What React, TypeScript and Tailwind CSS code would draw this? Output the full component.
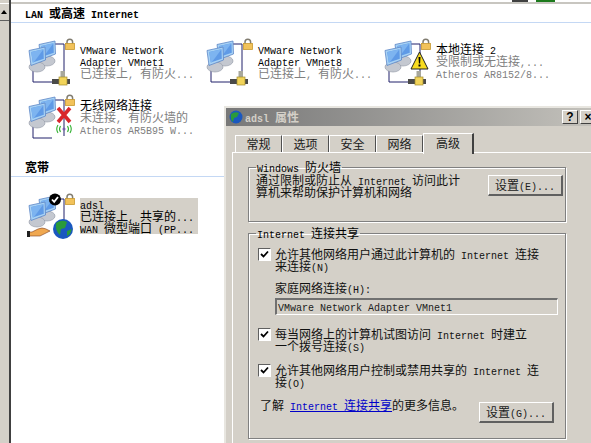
import type { ReactNode } from "react";

// SimSun-like metrics: latin is 6px wide, CJK 12px wide
function Txt({ children, bold }: { children: string; bold?: boolean }) {
  const parts = children.split(/([\u2E80-\uFFEF]+)/).filter(Boolean);
  return (
    <>
      {parts.map((p, i) =>
        /[\u2E80-\uFFEF]/.test(p) ? (
          <span key={i} className={`font-['Noto_Sans_CJK_SC',sans-serif] text-[12px] ${bold ? "font-bold" : "font-normal"}`}>
            {p}
          </span>
        ) : (
          <span key={i} className={`font-['Liberation_Mono',monospace] text-[10px] ${bold ? "font-bold" : "font-normal"}`}>
            {p}
          </span>
        )
      )}
    </>
  );
}

function Line({ children, className = "", bold }: { children: string; className?: string; bold?: boolean }) {
  return (
    <div className={`-mt-px mb-px h-3 leading-3 whitespace-pre ${className}`}>
      <Txt bold={bold}>{children}</Txt>
    </div>
  );
}

function Lock() {
  return (
    <g>
      <path d="M40 6V4a2.8 2.8 0 0 1 5.6 0v2" fill="none" stroke="#807c70" strokeWidth="1.5" />
      <rect x="38.5" y="5.5" width="9" height="6" fill="#f2c25a" stroke="#c89a30" strokeWidth="0.8" />
    </g>
  );
}

function Monitor({ x, y }: { x: number; y: number }) {
  return (
    <g transform={`translate(${x} ${y})`}>
      <ellipse cx="8" cy="20" rx="8" ry="5" fill="#c4c8d0" stroke="#8f95a2" strokeWidth="0.6" />
      <path d="M0 3.5 L16 0 L16.5 13 L2 18.5 Z" fill="#a8d2f4" stroke="#5d86c6" strokeWidth="0.8" />
      <path d="M2.2 5 L14.5 2.2 L14.8 11.8 L3.8 15.6 Z" fill="#5f9ae6" />
      <path d="M2.2 5 L14.5 2.2 L5 15 L3.8 15.6 Z" fill="#7db4f0" />
    </g>
  );
}

function Connector() {
  return (
    <g>
      <rect x="33.5" y="33" width="4.5" height="7" fill="#a8a89c" />
      <rect x="25" y="41" width="18" height="5" fill="#4a4a48" />
      <rect x="32" y="39" width="8" height="8" fill="#f2d45a" stroke="#a08a30" strokeWidth="0.7" />
    </g>
  );
}

function NetIcon({ kind }: { kind: "lan" | "warn" | "wifi" | "wan" }) {
  return (
    <svg width="48" height="48" viewBox="0 0 48 48" className="shrink-0">
      {kind === "wan" ? (
        <path d="M27 6H37V32" fill="none" stroke="#20206a" strokeWidth="1" />
      ) : (
        <path
          d={kind === "wifi" ? "M6 32V44H25M27 6H37V42" : "M6 32V44H26M27 6H37V34"}
          fill="none"
          stroke="#20206a"
          strokeWidth="1"
        />
      )}
      <Monitor x={12} y={3} />
      <Monitor x={2} y={9} />
      <Lock />
      {kind === "lan" && <Connector />}
      {kind === "warn" && (
        <g>
          <Connector />
          <path d="M36.5 14 L45 31 H28 Z" fill="#f8dc20" stroke="#222" strokeWidth="1" />
          <path d="M35.5 19h2l-.4 6.5h-1.2zM35.5 26.5h2v2h-2z" fill="#000" />
        </g>
      )}
      {kind === "wifi" && (
        <g>
          <path d="M31 14 L43 28 M43 14 L31 28" stroke="#d8262c" strokeWidth="3.6" />
          <circle cx="37" cy="35" r="1.5" fill="#7a5ab0" />
          <path d="M33.5 32q-2 3 0 6M40.5 32q2 3 0 6M31 31q-2.5 4 0 8M43 31q2.5 4 0 8" fill="none" stroke="#30b030" strokeWidth="1.1" />
        </g>
      )}
      {kind === "wan" && (
        <g>
          <circle cx="28" cy="6.5" r="6" fill="#000" />
          <path d="M25 6.5l2.2 2.4L31 4" fill="none" stroke="#fff" strokeWidth="1.8" />
          <circle cx="36" cy="36" r="10" fill="#1a58c0" />
          <path d="M29 30q6-4 11-1l-2 6-4 1-1 6q-5-4-4-12zM40 38l5-2-2 5-3 2z" fill="#2a9a3a" />
          <path d="M0 39h5q7-4 10-4t8 3l-10 5H0z" fill="#f0a850" stroke="#804020" strokeWidth="0.6" />
          <rect x="0" y="38" width="3" height="6" fill="#202020" />
        </g>
      )}
    </svg>
  );
}

function Tile({ kind, lines, w = "w-[178px]", selected }: { kind: "lan" | "warn" | "wifi" | "wan"; lines: { t: string; gray?: boolean }[]; w?: string; selected?: boolean }) {
  return (
    <div className={`flex items-start ${w}`}>
      <NetIcon kind={kind} />
      <div className={`ml-[5px] mt-[5px] flex flex-col ${selected ? "bg-[#d4d0c8] w-[118px]" : ""}`}>
        {lines.map((l) => (
          <Line key={l.t} className={l.gray ? "text-[#808080]" : "text-black"}>
            {l.t}
          </Line>
        ))}
      </div>
    </div>
  );
}

function SectionHead({ children, className = "" }: { children: string; className?: string }) {
  return (
    <div className={`h-[18px] border-b border-[#c4d8f4] pl-[14px] pt-[2px] ${className}`}>
      <Line bold>{children}</Line>
    </div>
  );
}

function Btn({ children, className = "" }: { children: string; className?: string }) {
  return (
    <div className={`flex w-[75px] h-[21px] items-center justify-center border-t border-l border-white border-r-2 border-b-2 border-r-[#606060] border-b-[#606060] bg-[#d4d0c8] text-[#202020] ${className}`}>
      <Line>{children}</Line>
    </div>
  );
}

function Group({ title, className = "", children }: { title: string; className?: string; children: ReactNode }) {
  return (
    <fieldset className={`border border-[#808080] shadow-[1px_1px_0_#fff,inset_1px_1px_0_#fff] ${className}`}>
      <legend className="ml-[7px] px-[1px] h-3 text-black">
        <Line>{title}</Line>
      </legend>
      {children}
    </fieldset>
  );
}

function Check({ lines, className = "" }: { lines: string[]; className?: string }) {
  return (
    <div className={`flex items-start ${className}`}>
      <div className="flex size-[13px] shrink-0 items-center justify-center border-t border-l border-[#606060] border-r border-b border-r-white border-b-white bg-white">
        <svg width="9" height="9" viewBox="0 0 9 9">
          <path d="M1 4l2.5 2.5L8 1.5" fill="none" stroke="#000" strokeWidth="1.8" />
        </svg>
      </div>
      <div className="ml-[4px] text-[#101010]">
        {lines.map((l) => (
          <Line key={l}>{l}</Line>
        ))}
      </div>
    </div>
  );
}

function Dialog() {
  const tabs = ["常规", "选项", "安全", "网络"];
  return (
    <div className="absolute left-[224px] top-[106px] w-[374px] h-[340px] border-t-2 border-l-2 border-[#e8e6e0] bg-[#d4d0c8]">
      <div className="flex h-[18px] items-center bg-gradient-to-r from-[#787878] to-[#c4c2bc] pl-[3px] pr-[2px]">
        <svg width="14" height="14" viewBox="0 0 14 14">
          <circle cx="7" cy="7" r="6.5" fill="#1a58c0" />
          <path d="M2 4q4-3 8-1l-2 4-3 1-1 4q-3-3-2-8z" fill="#2a9a3a" />
        </svg>
        <div className="ml-[2px] text-[#d4d0c8]">
          <Line bold>adsl 属性</Line>
        </div>
        <div className="ml-auto flex gap-[2px]">
          <div className="flex h-[14px] w-[16px] items-center justify-center border-t border-l border-white border-r border-b border-r-[#404040] border-b-[#404040] bg-[#d4d0c8] text-[12px] leading-none font-bold font-['Liberation_Sans',sans-serif]">?</div>
          <div className="flex h-[14px] w-[16px] items-center justify-center border-t border-l border-white border-r border-b border-r-[#404040] border-b-[#404040] bg-[#d4d0c8] text-[12px] leading-none font-bold font-['Liberation_Sans',sans-serif]">×</div>
        </div>
      </div>

      <div className="ml-[6px] mt-[7px] w-[400px]">
        <div className="flex h-[19px] items-end pl-[3px]">
          {tabs.map((t) => (
            <div key={t} className="flex h-[17px] w-[47px] items-center justify-center border-t border-l border-white border-r border-r-[#505050] text-[#202020]">
              <Line>{t}</Line>
            </div>
          ))}
          <div className="relative z-10 -mb-[2px] flex h-[21px] w-[51px] items-start justify-center border-t border-l border-white border-r-2 border-r-[#404040] bg-[#d4d0c8] pt-[3px] text-[#202020]">
            <Line>高级</Line>
          </div>
        </div>

        <div className="h-[300px] border-t border-l border-white pl-[15px] pt-[8px]">
          <Group title="Windows 防火墙" className="w-[318px] h-[61px]">
            <div className="flex items-start pl-[7px] pt-[1px]">
              <div className="w-[225px] text-[#101010]">
                <Line>通过限制或防止从 Internet 访问此计</Line>
                <Line>算机来帮助保护计算机和网络</Line>
              </div>
              <Btn className="ml-[7px] mt-[1px]">设置(E)...</Btn>
            </div>
          </Group>

          <Group title="Internet 连接共享" className="mt-[5px] w-[318px] h-[212px]">
            <div className="pl-[9px] pt-[9px]">
              <Check lines={["允许其他网络用户通过此计算机的 Internet 连接", "来连接(N)"]} />
              <div className="ml-[17px] mt-[10px] text-[#101010]">
                <Line>家庭网络连接(H):</Line>
              </div>
              <div className="ml-[17px] mt-[5px] flex h-[17px] w-[283px] items-start border-t-2 border-l-2 border-[#707070] border-r border-b border-r-white border-b-white pl-[1px] text-[#202020]">
                <Line>VMware Network Adapter VMnet1</Line>
              </div>
              <Check className="mt-[13px]" lines={["每当网络上的计算机试图访问 Internet 时建立", "一个拨号连接(S)"]} />
              <Check className="mt-[12px]" lines={["允许其他网络用户控制或禁用共享的 Internet 连", "接(O)"]} />
              <div className="mt-[11px] flex items-start pl-[2px] text-[#101010]">
                <div className="flex whitespace-pre">
                  <Line>了解 </Line>
                  <Line className="text-[#0000c8] underline">Internet 连接共享</Line>
                  <Line>的更多信息。</Line>
                </div>
                <Btn className="ml-[15px] mt-[3px]">设置(G)...</Btn>
              </div>
            </div>
          </Group>
        </div>
      </div>
    </div>
  );
}

export default function App() {
  return (
    <div className="relative flex h-[443px] w-[591px] overflow-hidden bg-white">
      <div className="w-[11px] shrink-0 border-r-2 border-[#404040] bg-[#d4d0c8] pt-[3px]">
        <div className="flex h-[18px] items-center justify-center border-t border-b border-t-white border-b-[#606060] pr-[1px]">
          <div className="size-0 border-x-[3px] border-b-[4px] border-x-transparent border-b-black" />
        </div>
      </div>

      <div className="min-w-0 flex-1">
        <div className="flex h-[4px] border-b-2 border-[#c8c6c0] pl-[501px]">
          <div className="h-[2px] w-[16px] bg-[#404040]" />
          <div className="ml-[8px] h-[2px] w-[19px] bg-[#1c7a1c]" />
        </div>
        <SectionHead className="mt-[1px]">LAN 或高速 Internet</SectionHead>

        <div className="mt-[15px] flex pl-[16px]">
          <Tile kind="lan" lines={[{ t: "VMware Network" }, { t: "Adapter VMnet1" }, { t: "已连接上, 有防火...", gray: true }]} />
          <Tile kind="lan" lines={[{ t: "VMware Network" }, { t: "Adapter VMnet8" }, { t: "已连接上, 有防火...", gray: true }]} />
          <Tile kind="warn" lines={[{ t: "本地连接 2" }, { t: "受限制或无连接,...", gray: true }, { t: "Atheros AR8152/8...", gray: true }]} />
        </div>

        <div className="mt-[8px] flex pl-[16px]">
          <Tile kind="wifi" lines={[{ t: "无线网络连接" }, { t: "未连接, 有防火墙的", gray: true }, { t: "Atheros AR5B95 W...", gray: true }]} />
        </div>

        <SectionHead className="mt-[17px]">宽带</SectionHead>

        <div className="mt-[16px] flex pl-[16px]">
          <Tile kind="wan" selected lines={[{ t: "adsl" }, { t: "已连接上, 共享的..." }, { t: "WAN 微型端口 (PP..." }]} />
        </div>
      </div>

      <Dialog />
    </div>
  );
}
